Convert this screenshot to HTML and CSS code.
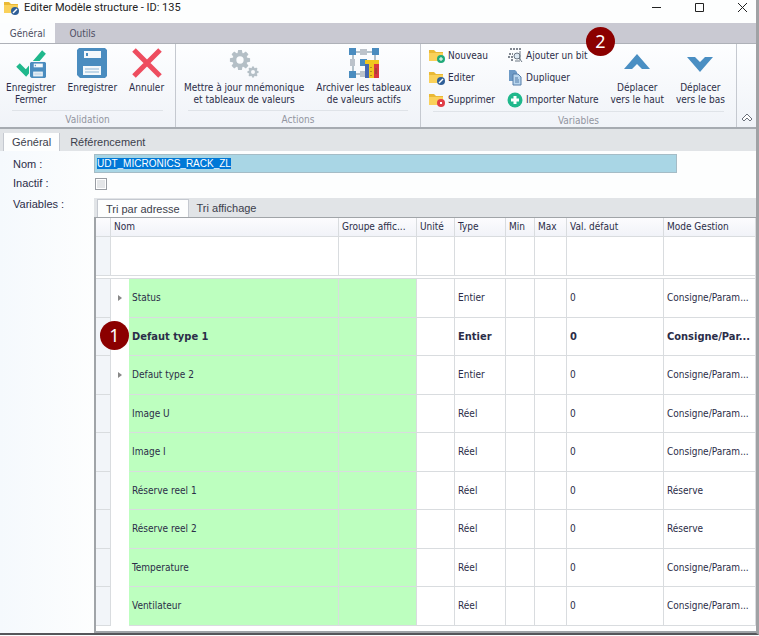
FILE: index.html
```
<!DOCTYPE html>
<html lang="fr">
<head>
    <meta charset="UTF-8">
    <meta name="viewport" content="width=device-width, initial-scale=1.0">
    <title>Editer Modèle structure - ID: 135</title>
    <link rel="stylesheet" href="styles.css">
</head>
<body>
    <!-- Shared icon shapes -->
    <svg class="symbols" width="0" height="0" aria-hidden="true">
        <symbol id="folder" viewBox="0 0 16 16">
            <path d="M0 2h5l2 2h7v9H0z" fill="#eab935"/>
            <path d="M0 5h14v8H0z" fill="#fad15a"/>
        </symbol>
        <symbol id="floppy" viewBox="0 0 30 30">
            <path d="M2 0h26l2 2v26l-2 2H3l-3-3V2z" fill="#4a8cbf"/>
            <path d="M7 3h17v7H7z" fill="#f4f8fb"/>
            <path d="M9 5h2v3H9z" fill="#4a8cbf"/>
            <path d="M6 18h18v9H6z" fill="#f4f8fb"/>
            <path d="M8 21h14M8 24h14" stroke="#8cb5d5" stroke-width="1"/>
        </symbol>
        <symbol id="gear" viewBox="-12 -12 24 24">
            <g fill="#b4bfc6">
                <path id="tooth" d="M-2-11h4l1 5h-6zM-2 11h4l1-5h-6z"/>
                <use href="#tooth" transform="rotate(45)"/>
                <use href="#tooth" transform="rotate(90)"/>
                <use href="#tooth" transform="rotate(135)"/>
            </g>
            <circle r="6" fill="none" stroke="#b4bfc6" stroke-width="4"/>
        </symbol>
    </svg>

    <div class="window">
        <header class="titlebar">
            <svg class="icon" viewBox="0 0 16 16">
                <use href="#folder" width="16" height="16"/>
                <circle cx="11" cy="11" r="4" fill="#2f5f98"/>
                <path d="M9 13l4-4" stroke="#fff" stroke-width="1.5"/>
            </svg>
            <h1>Editer Modèle structure - ID: 135</h1>
            <div class="window-buttons">
                <button type="button" aria-label="Réduire"><svg viewBox="0 0 11 11"><path d="M1 5.500h9"/></svg></button>
                <button type="button" aria-label="Agrandir"><svg viewBox="0 0 11 11"><path d="M1.500 1.500h8v8h-8z"/></svg></button>
                <button type="button" aria-label="Fermer"><svg viewBox="0 0 11 11"><path d="M1 1l9 9M10 1l-9 9"/></svg></button>
            </div>
        </header>

        <nav class="ribbon-tabs">
            <button type="button" class="active">Général</button>
            <button type="button">Outils</button>
        </nav>

        <div class="ribbon">
            <section class="group group-validation">
                <div class="group-items">
                    <button type="button" class="big">
                        <svg viewBox="0 0 30 30">
                            <path d="M2 17l8 8L28 4" fill="none" stroke="#20b88c" stroke-width="5"/>
                            <path d="M13 13h17v17H13z" fill="#f8fafc"/>
                            <use href="#floppy" x="14" y="14" width="16" height="16"/>
                        </svg>
                        <span>Enregistrer<br>Fermer</span>
                    </button>
                    <button type="button" class="big">
                        <svg viewBox="0 0 30 30"><use href="#floppy" width="30" height="30"/></svg>
                        <span>Enregistrer</span>
                    </button>
                    <button type="button" class="big">
                        <svg viewBox="0 0 30 30"><path d="M2 2l26 26M28 2L2 28" stroke="#ee4d5f" stroke-width="5"/></svg>
                        <span>Annuler</span>
                    </button>
                </div>
                <div class="group-title">Validation</div>
            </section>

            <section class="group group-actions">
                <div class="group-items">
                    <button type="button" class="big">
                        <svg viewBox="0 0 30 30">
                            <use href="#gear" x="0" y="1" width="22" height="22"/>
                            <use href="#gear" x="18" y="18" width="12" height="12"/>
                        </svg>
                        <span>Mettre à jour mnémonique<br>et tableaux de valeurs</span>
                    </button>
                    <button type="button" class="big">
                        <svg viewBox="0 0 30 30">
                            <path d="M4 4h22M4 4v22h22V4" fill="none" stroke="#6d8798" stroke-width="1"/>
                            <path d="M0 0h7v7H0zM23 0h7v7h-7zM0 23h7v7H0zM11 11h7v7h-7z" fill="#4a8cbf"/>
                            <path d="M11 1h7v6h-7zM1 11h5v7H1zM11 23h7v6h-7z" fill="#bcc3cb"/>
                            <path d="M16 12h14v4H16z" fill="#f0c61e"/>
                            <path d="M16 16h4v14h-4z" fill="#4667b0"/>
                            <path d="M20 16h5v14h-5z" fill="#f0c61e"/>
                            <path d="M25 16h5v14h-5z" fill="#d93643"/>
                            <path d="M22 19v1M22 23v1M22 27v1M27 20v6" stroke="#765028" stroke-width="1"/>
                        </svg>
                        <span>Archiver les tableaux<br>de valeurs actifs</span>
                    </button>
                </div>
                <div class="group-title">Actions</div>
            </section>

            <section class="group group-variables">
                <div class="group-items">
                    <div class="small-list">
                        <button type="button" class="small">
                            <svg viewBox="0 0 16 16"><use href="#folder" width="16" height="16"/><circle cx="12" cy="11" r="4" fill="#20a979"/><path d="M12 9v4M10 11h4" stroke="#fff"/></svg>
                            Nouveau
                        </button>
                        <button type="button" class="small">
                            <svg viewBox="0 0 16 16"><use href="#folder" width="16" height="16"/><circle cx="12" cy="11" r="4" fill="#2f5f98"/><path d="M10 13l4-4" stroke="#fff" stroke-width="1.500"/></svg>
                            Editer
                        </button>
                        <button type="button" class="small">
                            <svg viewBox="0 0 16 16"><use href="#folder" width="16" height="16"/><circle cx="12" cy="11" r="4" fill="#e03d47"/><path d="M11 10l2 2M13 10l-2 2" stroke="#fff"/></svg>
                            Supprimer
                        </button>
                    </div>
                    <div class="small-list">
                        <button type="button" class="small">
                            <svg viewBox="0 0 16 16">
                                <path d="M3 1h11M2 6h4M1 9h6M4 12h3" stroke="#59626e" stroke-width="1.500" stroke-dasharray="2 1"/>
                                <circle cx="10" cy="8" r="3" fill="#dce8f2" stroke="#6d7884"/>
                                <path d="M12 10l3 4M13 3v9M8 13h5" stroke="#6d7884"/>
                            </svg>
                            Ajouter un bit
                        </button>
                        <button type="button" class="small">
                            <svg viewBox="0 0 16 16">
                                <path d="M2 0h6l2 2v9H2z" fill="#6d9ac6"/>
                                <path d="M6 4h5l3 3v8H6z" fill="#b9d6ee" stroke="#547da8"/>
                                <path d="M8 8h3M8 10h4M8 12h4" stroke="#547da8"/>
                            </svg>
                            Dupliquer
                        </button>
                        <button type="button" class="small">
                            <svg viewBox="0 0 16 16"><circle cx="8" cy="8" r="7.500" fill="#20b88c"/><path d="M8 4v8M4 8h8" stroke="#fff" stroke-width="3"/></svg>
                            Importer Nature
                        </button>
                    </div>
                    <button type="button" class="big">
                        <svg viewBox="0 0 30 30"><path d="M2 21L15 6l13 15h-8l-5-5-5 5z" fill="#4a8fc3"/></svg>
                        <span>Déplacer<br>vers le haut</span>
                    </button>
                    <button type="button" class="big">
                        <svg viewBox="0 0 30 30"><path d="M2 9h8l5 5 5-5h8L15 24z" fill="#4a8fc3"/></svg>
                        <span>Déplacer<br>vers le bas</span>
                    </button>
                </div>
                <div class="group-title">Variables</div>
                <span class="badge badge-bit">2</span>
            </section>

            <button type="button" class="collapse" aria-label="Réduire le ruban">
                <svg viewBox="0 0 12 10"><path d="M1 6l5-5 5 5-2 2-3-3-3 3z" fill="#fff" stroke="#6b717b"/></svg>
            </button>
        </div>

        <nav class="page-tabs">
            <button type="button" class="active">Général</button>
            <button type="button">Référencement</button>
        </nav>

        <main class="form">
            <label for="nom">Nom :</label>
            <div class="name-field"><input type="text" id="nom" value="UDT_MICRONICS_RACK_ZL"></div>

            <label for="inactif">Inactif :</label>
            <input type="checkbox" id="inactif">

            <span class="form-label">Variables :</span>
            <div class="variables">
                <nav class="grid-tabs">
                    <button type="button" class="active">Tri par adresse</button>
                    <button type="button">Tri affichage</button>
                </nav>
                <div class="grid">
                    <table>
                        <colgroup>
                            <col class="col-handle">
                            <col class="col-arrow">
                            <col class="col-nom">
                            <col class="col-groupe">
                            <col class="col-unite">
                            <col class="col-type">
                            <col class="col-min">
                            <col class="col-max">
                            <col class="col-val">
                            <col class="col-mode">
                        </colgroup>
                        <thead>
                            <tr>
                                <th class="handle"></th>
                                <th colspan="2">Nom</th>
                                <th>Groupe affic...</th>
                                <th>Unité</th>
                                <th>Type</th>
                                <th>Min</th>
                                <th>Max</th>
                                <th>Val. défaut</th>
                                <th>Mode Gestion</th>
                            </tr>
                            <tr class="new-row">
                                <td class="handle"></td><td colspan="2"></td><td></td><td></td><td></td><td></td><td></td><td></td><td></td>
                            </tr>
                            <tr class="split"><td colspan="10"></td></tr>
                        </thead>
                        <tbody>
                            <tr><td class="handle"></td><td class="arrow"><i></i></td><td class="green">Status</td><td class="green"></td><td></td><td>Entier</td><td></td><td></td><td>0</td><td>Consigne/Param...</td></tr>
                            <tr class="current"><td class="handle"></td><td class="arrow"><span class="badge badge-row">1</span></td><td class="green">Defaut type 1</td><td class="green"></td><td></td><td>Entier</td><td></td><td></td><td>0</td><td>Consigne/Par...</td></tr>
                            <tr><td class="handle"></td><td class="arrow"><i></i></td><td class="green">Defaut type 2</td><td class="green"></td><td></td><td>Entier</td><td></td><td></td><td>0</td><td>Consigne/Param...</td></tr>
                            <tr><td class="handle"></td><td class="arrow"></td><td class="green">Image U</td><td class="green"></td><td></td><td>Réel</td><td></td><td></td><td>0</td><td>Consigne/Param...</td></tr>
                            <tr><td class="handle"></td><td class="arrow"></td><td class="green">Image I</td><td class="green"></td><td></td><td>Réel</td><td></td><td></td><td>0</td><td>Consigne/Param...</td></tr>
                            <tr><td class="handle"></td><td class="arrow"></td><td class="green">Réserve reel 1</td><td class="green"></td><td></td><td>Réel</td><td></td><td></td><td>0</td><td>Réserve</td></tr>
                            <tr><td class="handle"></td><td class="arrow"></td><td class="green">Réserve reel 2</td><td class="green"></td><td></td><td>Réel</td><td></td><td></td><td>0</td><td>Réserve</td></tr>
                            <tr><td class="handle"></td><td class="arrow"></td><td class="green">Temperature</td><td class="green"></td><td></td><td>Réel</td><td></td><td></td><td>0</td><td>Consigne/Param...</td></tr>
                            <tr><td class="handle"></td><td class="arrow"></td><td class="green">Ventilateur</td><td class="green"></td><td></td><td>Réel</td><td></td><td></td><td>0</td><td>Consigne/Param...</td></tr>
                        </tbody>
                    </table>
                </div>
            </div>
        </main>
    </div>
    <script src="script.js"></script>
</body>
</html>
```
FILE: styles.css
```
* {
    box-sizing: border-box;
}

body {
    margin: 0;
    background: #fdfefe;
    color: #2b2d48;
    font-family: "DejaVu Sans Condensed", "DejaVu Sans", sans-serif;
    font-size: 10px;
    line-height: 12px;
}

button {
    margin: 0;
    padding: 0;
    border: none;
    background: none;
    color: inherit;
    font: inherit;
}

.symbols {
    position: absolute;
}

.window {
    border-right: 3px solid #a0a2a5;
    border-bottom: 2px solid #55565a;
}

/* Title bar */
.titlebar {
    display: flex;
    align-items: center;
    gap: 4px;
    height: 23px;
    padding: 0 8px 8px 4px;
}

.titlebar .icon {
    width: 16px;
    height: 16px;
}

.titlebar h1 {
    flex: 1;
    margin: 0;
    color: #222;
    font: 11px/16px Roboto, sans-serif;
}

.window-buttons {
    display: flex;
    gap: 32px;
}

.window-buttons svg {
    display: block;
    width: 11px;
    height: 11px;
    fill: none;
    stroke: #222;
}

/* Ribbon */
.ribbon-tabs {
    display: flex;
    height: 20px;
    background: #c9c9d2;
    color: #4d4d62;
}

.ribbon-tabs button {
    width: 55px;
    padding-top: 2px;
}

.ribbon-tabs .active {
    background: #fcfdfe;
}

.ribbon {
    display: flex;
    height: 86px;
    border-top: 1px solid #aeb1b8;
    border-bottom: 2px solid #a6abb1;
    background: linear-gradient(#fdfeff, #f0f3f8);
}

.group {
    position: relative;
    display: flex;
    flex-direction: column;
    border-right: 1px solid #c5c9d0;
}

.group-validation {
    width: 176px;
}

.group-actions {
    width: 245px;
}

.group-variables {
    width: 316px;
}

.group-items {
    display: flex;
    flex: 1;
    gap: 12px;
    padding-left: 8px;
}

.group-validation .group-items {
    padding-left: 6px;
}

.group-title {
    margin: 0 12px;
    padding-top: 3px;
    height: 17px;
    border-top: 1px solid #dfe3e8;
    color: #9295a0;
    text-align: center;
}

.big {
    display: flex;
    flex-direction: column;
    align-items: center;
    gap: 4px;
    padding-top: 4px;
    white-space: nowrap;
}

.big svg {
    width: 30px;
    height: 30px;
}

.small-list {
    display: flex;
    flex-direction: column;
    padding-top: 1px;
}

.small {
    display: flex;
    align-items: center;
    gap: 3px;
    height: 22px;
    white-space: nowrap;
}

.small svg {
    width: 16px;
    height: 16px;
}

.collapse {
    margin: auto 0 4px 4px;
}

.collapse svg {
    display: block;
    width: 12px;
    height: 10px;
}

.badge {
    position: absolute;
    z-index: 1;
    width: 29px;
    height: 29px;
    border-radius: 50%;
    background: #8b0000;
    color: #fff;
    font: 18px/29px "Noto Sans", sans-serif;
    text-align: center;
}

.badge-bit {
    top: -17px;
    left: 165px;
}

.badge-row {
    top: 3px;
    left: -11px;
}

/* Page tabs */
.page-tabs,
.grid-tabs,
.form {
    font: 11px/14px "Liberation Sans", Arial, sans-serif;
}

.page-tabs,
.grid-tabs {
    display: flex;
    background: #e1e4e7;
    color: #3c3e4c;
}

.page-tabs {
    height: 22px;
    padding: 4px 0 0 3px;
}

.page-tabs button {
    padding: 0 10px;
    height: 18px;
}

.page-tabs .active {
    padding: 0 8px;
    background: #fdfefe;
    border-left: 1px solid #c5c9d0;
    border-right: 1px solid #c5c9d0;
}

/* Form */
.form {
    display: grid;
    grid-template-columns: 81px 1fr;
    align-items: center;
    padding: 3px 0 0 13px;
    background: linear-gradient(90deg, #f5f9fd, #fdfefe 95px);
}

.form-label {
    align-self: start;
    padding-top: 4px;
}

.name-field {
    width: 88%;
    background: #a9d6e5;
    border: 1px solid #a5bcc6;
}

.name-field input {
    display: block;
    width: 100%;
    height: 17px;
    padding: 0 2px;
    border: none;
    outline: none;
    background: none;
    color: #111;
    font: 10px/14px "Liberation Sans", Arial, sans-serif;
}

.name-field input::selection {
    background: #0078d7;
    color: #fff;
}

.form input[type="checkbox"] {
    appearance: none;
    width: 12px;
    height: 12px;
    margin: 5px 0 3px 1px;
    border: 1px solid #999da3;
    background: #e4e6e8;
    box-shadow: inset 0 0 0 1px #fff;
}

.variables {
    min-width: 0;
    margin-top: 5px;
}

.grid-tabs {
    height: 19px;
    padding: 1px 0 0 3px;
}

.grid-tabs button {
    padding: 0 8px;
}

.grid-tabs .active {
    background: #fdfefe;
    border: 1px solid #c5c9d0;
    border-bottom: none;
}

/* Variables grid */
.grid {
    padding-bottom: 5px;
    border-left: 2px solid #a0a4a8;
    border-top: 1px solid #a0a4a8;
    border-bottom: 2px solid #a0a4a8;
    background: #fff;
    font: 10px/12px "DejaVu Sans Condensed", "DejaVu Sans", sans-serif;
}

table {
    width: 100%;
    table-layout: fixed;
    border-collapse: separate;
    border-spacing: 0;
}

.col-handle { width: 15px; }
.col-arrow { width: 18px; }
.col-nom { width: 210px; }
.col-groupe { width: 78px; }
.col-unite { width: 38px; }
.col-type { width: 51px; }
.col-min { width: 29px; }
.col-max { width: 32px; }
.col-val { width: 97px; }

th,
td {
    padding: 0 3px;
    border-right: 1px solid #d9dcdf;
    border-bottom: 1px solid #d9dcdf;
    font-weight: normal;
    text-align: left;
    white-space: nowrap;
}

th {
    height: 19px;
    background: linear-gradient(#fcfcfe, #f1f3f8);
}

.new-row td {
    height: 39px;
}

.split td {
    height: 3px;
    padding: 0;
}

tbody td {
    position: relative;
    height: 39px;
}

tbody tr:nth-child(even) td {
    height: 38px;
}

td.handle {
    background: #f2f5f9;
}

td.arrow {
    border-color: #fff;
}

.arrow i {
    display: block;
    width: 0;
    margin-left: 4px;
    border: 3px solid transparent;
    border-left: 4px solid #888;
    border-right: none;
}

.green {
    background: #bdffbf;
}

.current td {
    font-size: 11px;
    font-weight: bold;
}
```
FILE: script.js
```
// The name is selected when the window opens
document.getElementById('nom').select();
```
